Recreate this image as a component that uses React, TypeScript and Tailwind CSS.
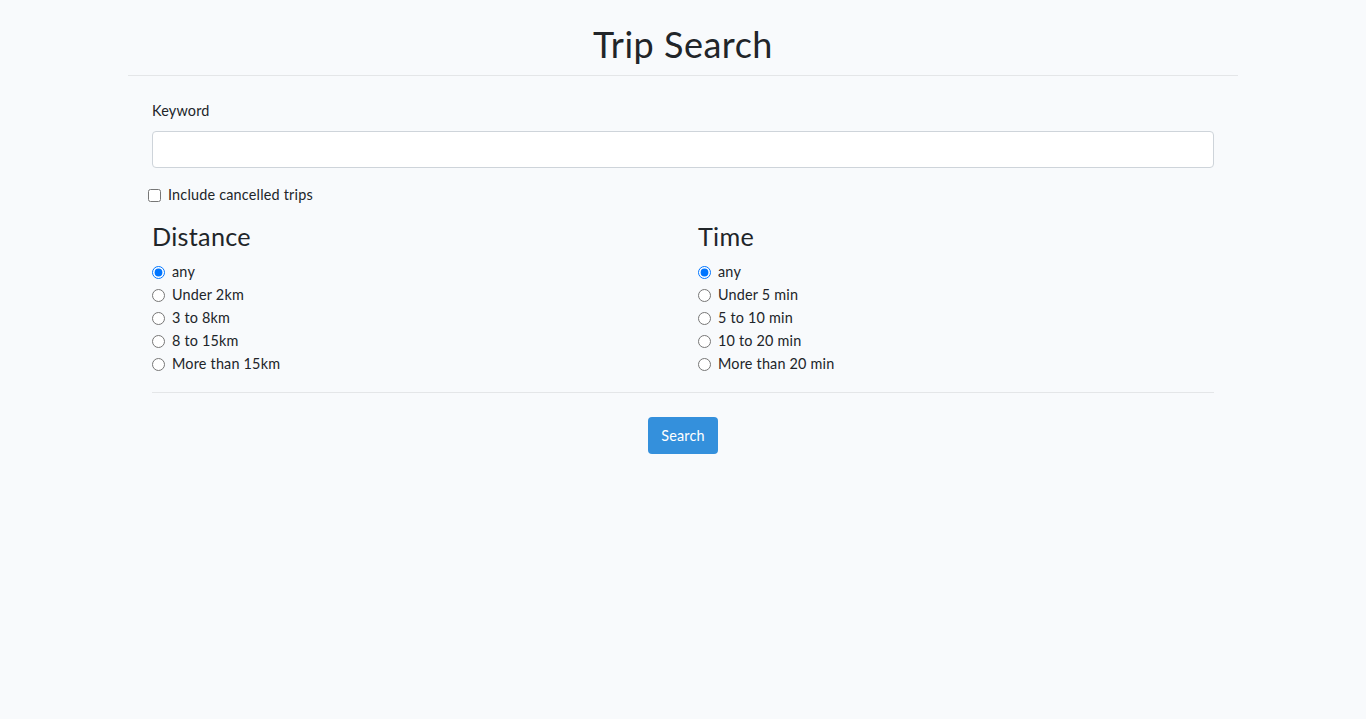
import { useState } from "react";

const DISTANCES = ["any", "Under 2km", "3 to 8km", "8 to 15km", "More than 15km"];
const TIMES = ["any", "Under 5 min", "5 to 10 min", "10 to 20 min", "More than 20 min"];

function RadioGroup({ title, name, options }: { title: string; name: string; options: string[] }) {
  const [value, setValue] = useState(options[0]);
  return (
    <div>
      <h3 className="mb-2 h-[30px] text-[25.2px] leading-[26px] font-normal tracking-[0.3px]">{title}</h3>
      {options.map((o) => (
        <label key={o} className="flex items-center h-[23px]">
          <input
            type="radio"
            name={name}
            checked={value === o}
            onChange={() => setValue(o)}
            className="m-0 w-[13px] h-[13px] mr-[7px]"
          />
          <span className="leading-[22px] pb-[1px]">{o}</span>
        </label>
      ))}
    </div>
  );
}

export default function App() {
  return (
    <div
      className="min-h-[719px] bg-[#f8fafc] text-[#212529] text-[14.4px] leading-[1.6] tracking-[0.2px]"
      style={{ fontFamily: "Lato, 'Noto Sans', sans-serif" }}
    >
      <div className="w-[1110px] mx-auto">
        <h1 className="pt-[23px] pb-[9px] text-center text-[36px] leading-[1.2] font-normal tracking-[0.5px] border-b border-[#e4e6e8]">
          Trip Search
        </h1>
        <div className="px-[24px] pt-[24px]">
          <div className="mb-4">
            <label className="block mb-2 leading-[22px] pb-[1px]">Keyword</label>
            <input
              type="text"
              className="block w-full h-[37px] rounded-[4px] border border-[#ced4da] bg-white px-3"
            />
          </div>
          <label className="flex items-center h-[23px] -ml-[4px] mb-4">
            <input type="checkbox" className="m-0 w-[13px] h-[13px] mr-[7px]" />
            <span className="leading-[22px] pb-[1px]">Include cancelled trips</span>
          </label>
          <div className="grid grid-cols-2 gap-[30px]">
            <RadioGroup title="Distance" name="distance" options={DISTANCES} />
            <RadioGroup title="Time" name="time" options={TIMES} />
          </div>
          <div className="mt-4 border-t border-[#e4e6e8]" />
          <div className="mt-[24px] flex justify-center">
            <button className="h-[37px] w-[70px] pb-[1px] rounded-[4px] bg-[#3490dc] text-white">Search</button>
          </div>
        </div>
      </div>
    </div>
  );
}
